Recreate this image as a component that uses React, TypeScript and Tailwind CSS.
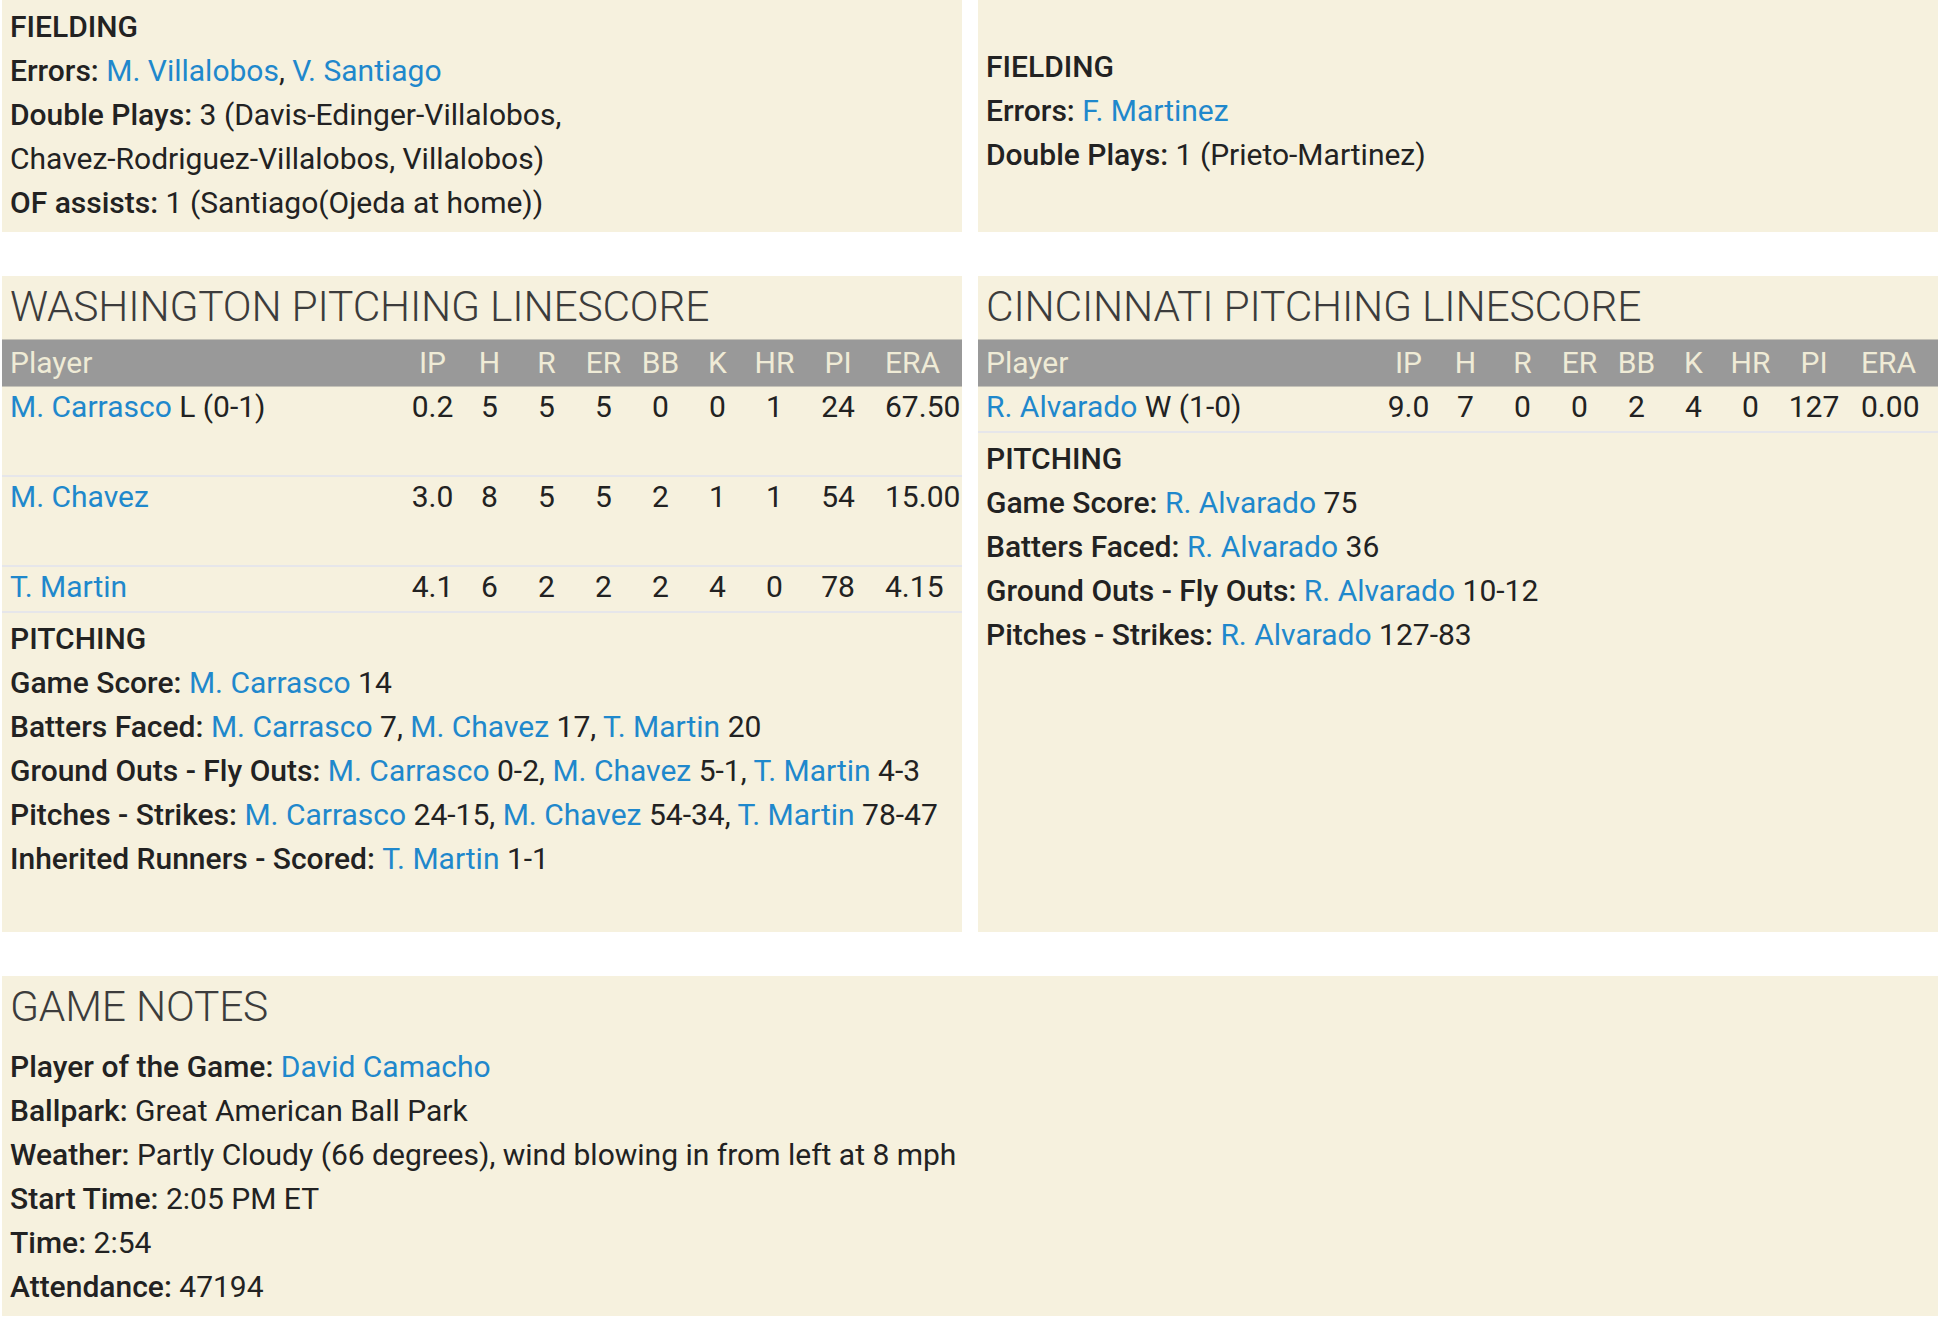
import React from 'react'

const LINK = 'text-[#1f88cc]'

function P({ children }: { children: React.ReactNode }) {
  return <a className={LINK}>{children}</a>
}

function Line({ label, children }: { label?: string; children?: React.ReactNode }) {
  return (
    <div className="h-[44px] leading-[44px] whitespace-nowrap">
      {label && <span className="font-medium">{label} </span>}
      {children}
    </div>
  )
}

function Heading({ children }: { children: React.ReactNode }) {
  return (
    <div className="h-[63px] leading-[62px] pl-[8px] text-[42.5px] font-light text-[#3c3c3c] tracking-[-0.2px] whitespace-nowrap">
      {children}
    </div>
  )
}

interface PitcherRow {
  name: string
  note?: string
  ip: string
  h: number
  r: number
  er: number
  bb: number
  k: number
  hr: number
  pi: number
  era: string
  tall?: boolean
}

const COLS = 'grid grid-cols-[402px_57px_57px_57px_57px_57px_57px_57px_70px_66px]'

function StatCell({ children, era }: { children: React.ReactNode; era?: boolean }) {
  return (
    <div className={era ? 'pl-[12px] text-center whitespace-nowrap' : 'text-center whitespace-nowrap'}>
      {children}
    </div>
  )
}

function PitchingTable({ rows }: { rows: PitcherRow[] }) {
  const heads = ['IP', 'H', 'R', 'ER', 'BB', 'K', 'HR', 'PI']
  return (
    <div>
      <div className={`${COLS} h-[48px] leading-[46px] bg-[#999999] border-y border-[#c4c2b8] text-[#efebd6]`}>
        <div className="pl-[8px]">Player</div>
        {heads.map(h => <StatCell key={h}>{h}</StatCell>)}
        <StatCell era>ERA</StatCell>
      </div>
      {rows.map(r => (
        <div key={r.name} className={`${COLS} ${r.tall ? 'h-[90px]' : 'h-[46px]'} leading-[40px] border-b-2 border-[#e6e6ea]`}>
          <div className="pl-[8px] whitespace-nowrap">
            <P>{r.name}</P>{r.note ? ` ${r.note}` : ''}
          </div>
          <StatCell>{r.ip}</StatCell>
          <StatCell>{r.h}</StatCell>
          <StatCell>{r.r}</StatCell>
          <StatCell>{r.er}</StatCell>
          <StatCell>{r.bb}</StatCell>
          <StatCell>{r.k}</StatCell>
          <StatCell>{r.hr}</StatCell>
          <StatCell>{r.pi}</StatCell>
          <StatCell era>{r.era}</StatCell>
        </div>
      ))}
    </div>
  )
}

const WSH: PitcherRow[] = [
  { name: 'M. Carrasco', note: 'L (0-1)', ip: '0.2', h: 5, r: 5, er: 5, bb: 0, k: 0, hr: 1, pi: 24, era: '67.50', tall: true },
  { name: 'M. Chavez', ip: '3.0', h: 8, r: 5, er: 5, bb: 2, k: 1, hr: 1, pi: 54, era: '15.00', tall: true },
  { name: 'T. Martin', ip: '4.1', h: 6, r: 2, er: 2, bb: 2, k: 4, hr: 0, pi: 78, era: '4.15' },
]

const CIN: PitcherRow[] = [
  { name: 'R. Alvarado', note: 'W (1-0)', ip: '9.0', h: 7, r: 0, er: 0, bb: 2, k: 4, hr: 0, pi: 127, era: '0.00' },
]

export default function App() {
  return (
    <div className="min-h-screen bg-white pl-[2px] text-[30px] text-[#222222]" style={{ fontFamily: 'Roboto, "Liberation Sans", sans-serif' }}>
      <div className="grid grid-cols-[960px_960px] gap-x-[16px]">
        {/* fielding */}
        <div className="h-[232px] bg-[#f6f1de] pl-[8px] pt-[5px]">
          <Line><span className="font-medium">FIELDING</span></Line>
          <Line label="Errors:"><P>M. Villalobos</P>, <P>V. Santiago</P></Line>
          <Line label="Double Plays:">3 (Davis-Edinger-Villalobos,</Line>
          <Line>Chavez-Rodriguez-Villalobos, Villalobos)</Line>
          <Line label="OF assists:">1 (Santiago(Ojeda at home))</Line>
        </div>
        <div className="h-[232px] bg-[#f6f1de] pl-[8px] pt-[45px]">
          <Line><span className="font-medium">FIELDING</span></Line>
          <Line label="Errors:"><P>F. Martinez</P></Line>
          <Line label="Double Plays:">1 (Prieto-Martinez)</Line>
        </div>

        {/* pitching */}
        <div className="mt-[44px] h-[656px] bg-[#f6f1de]">
          <Heading>WASHINGTON PITCHING LINESCORE</Heading>
          <PitchingTable rows={WSH} />
          <div className="pl-[8px] pt-[4px]">
            <Line><span className="font-medium">PITCHING</span></Line>
            <Line label="Game Score:"><P>M. Carrasco</P> 14</Line>
            <Line label="Batters Faced:"><P>M. Carrasco</P> 7, <P>M. Chavez</P> 17, <P>T. Martin</P> 20</Line>
            <Line label="Ground Outs - Fly Outs:"><P>M. Carrasco</P> 0-2, <P>M. Chavez</P> 5-1, <P>T. Martin</P> 4-3</Line>
            <Line label="Pitches - Strikes:"><P>M. Carrasco</P> 24-15, <P>M. Chavez</P> 54-34, <P>T. Martin</P> 78-47</Line>
            <Line label="Inherited Runners - Scored:"><P>T. Martin</P> 1-1</Line>
          </div>
        </div>
        <div className="mt-[44px] h-[656px] bg-[#f6f1de]">
          <Heading>CINCINNATI PITCHING LINESCORE</Heading>
          <PitchingTable rows={CIN} />
          <div className="pl-[8px] pt-[4px]">
            <Line><span className="font-medium">PITCHING</span></Line>
            <Line label="Game Score:"><P>R. Alvarado</P> 75</Line>
            <Line label="Batters Faced:"><P>R. Alvarado</P> 36</Line>
            <Line label="Ground Outs - Fly Outs:"><P>R. Alvarado</P> 10-12</Line>
            <Line label="Pitches - Strikes:"><P>R. Alvarado</P> 127-83</Line>
          </div>
        </div>

        {/* game notes */}
        <div className="col-span-2 mt-[44px] h-[340px] bg-[#f6f1de]">
          <Heading>GAME NOTES</Heading>
          <div className="pl-[8px] pt-[6px]">
            <Line label="Player of the Game:"><P>David Camacho</P></Line>
            <Line label="Ballpark:">Great American Ball Park</Line>
            <Line label="Weather:">Partly Cloudy (66 degrees), wind blowing in from left at 8 mph</Line>
            <Line label="Start Time:">2:05 PM ET</Line>
            <Line label="Time:">2:54</Line>
            <Line label="Attendance:">47194</Line>
          </div>
        </div>
      </div>
    </div>
  )
}
